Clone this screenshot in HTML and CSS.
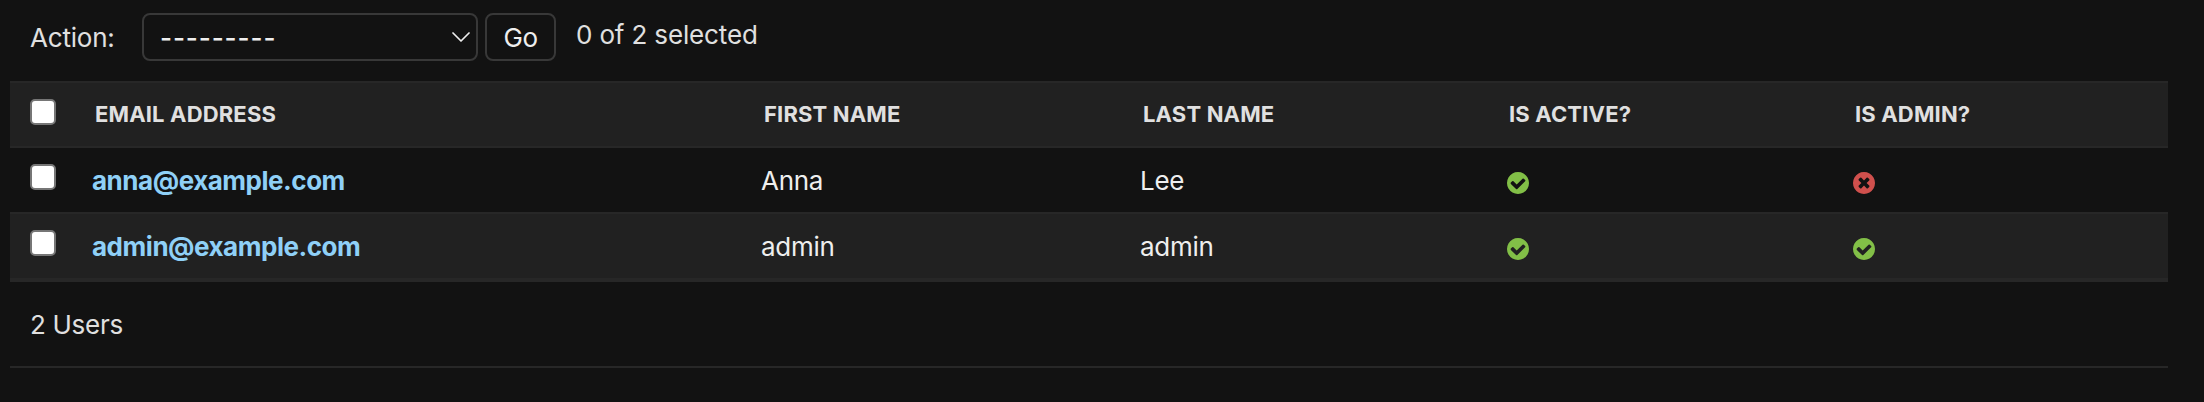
FILE: index.html
```
<!DOCTYPE html>
<html lang="en">
<head>
<meta charset="utf-8">
<title>Users</title>
<link rel="stylesheet" href="styles.css">
</head>
<body>
<svg class="defs" width="0" height="0">
  <symbol id="yes" viewBox="0 0 1536 1536"><path d="M1284 606q0-28-18-46l-91-90q-19-19-45-19t-45 19l-408 407-226-226q-19-19-45-19t-45 19l-91 90q-18 18-18 46 0 27 18 45l362 362q19 19 45 19 27 0 46-19l543-543q18-18 18-45zm252 162q0 209-103 385.500t-279.500 279.500-385.500 103-385.500-103-279.500-279.500-103-385.500 103-385.500 279.500-279.500 385.500-103 385.500 103 279.500 279.500 103 385.500z"/></symbol>
  <symbol id="no" viewBox="0 0 1536 1536"><path d="M1149 994q0-26-19-45l-181-181 181-181q19-19 19-45 0-27-19-46l-90-90q-19-19-46-19-26 0-45 19l-181 181-181-181q-19-19-45-19-27 0-46 19l-90 90q-19 19-19 46 0 26 19 45l181 181-181 181q-19 19-19 45 0 27 19 46l90 90q19 19 46 19 26 0 45-19l181-181 181 181q19 19 45 19 27 0 46-19l90-90q19-19 19-46zm387-226q0 209-103 385.500t-279.500 279.500-385.500 103-385.500-103-279.500-279.500-103-385.500 103-385.500 279.500-279.500 385.500-103 385.500 103 279.500 279.500 103 385.500z"/></symbol>
</svg>
<main class="changelist">
  <div class="actions">
    <span class="label">Action:</span>
    <div class="select"><span class="dashes">---------</span><svg class="chevron" width="18" height="11" viewBox="0 0 18 11"><path d="M1 1l8 8 8-8"/></svg></div>
    <button class="go">Go</button>
    <span class="counter">0 of 2 selected</span>
  </div>
  <div class="table">
    <div class="row head">
      <input type="checkbox" class="box"><span>EMAIL ADDRESS</span><span>FIRST NAME</span><span>LAST NAME</span><span>IS ACTIVE?</span><span>IS ADMIN?</span>
    </div>
    <div class="row">
      <input type="checkbox" class="box"><a class="link">anna@example.com</a><span class="cell">Anna</span><span class="cell">Lee</span><svg class="icon yes"><use href="#yes"/></svg><svg class="icon no"><use href="#no"/></svg>
    </div>
    <div class="row even">
      <input type="checkbox" class="box"><a class="link">admin@example.com</a><span class="cell">admin</span><span class="cell">admin</span><svg class="icon yes"><use href="#yes"/></svg><svg class="icon yes"><use href="#yes"/></svg>
    </div>
  </div>
  <p class="paginator">2 Users</p>
</main>
</body>
</html>
```
FILE: styles.css
```
* { box-sizing: border-box; }
body { margin: 0; height: 402px; overflow: hidden; background: #121212; color: #eee; font-family: Inter, "Liberation Sans", sans-serif; font-size: 26px; line-height: 32px; letter-spacing: -0.2px; }
.defs { display: block; width: 0; height: 0; position: absolute; }
.changelist { width: 2158px; margin-left: 10px; }
.actions { display: flex; height: 81px; padding: 13px 0 0 20px; color: #e0e0e0; }
.label { width: 112px; padding-top: 9px; }
.select { display: flex; justify-content: space-between; width: 336px; height: 48px; padding: 7px 6px 0 16px; border: 2px solid #383838; border-radius: 8px; color: #eee; }
.dashes { font-weight: 500; letter-spacing: 0.9px; }
.chevron { margin-top: 10px; fill: none; stroke: #eee; stroke-width: 1.7; stroke-linecap: round; stroke-linejoin: round; }
.go { width: 71px; height: 48px; margin: 0 20px 0 7px; padding: 1px 0 0; border: 2px solid #383838; border-radius: 8px; background: #121212; color: #eee; font: inherit; letter-spacing: -0.4px; }
.counter { padding-top: 6px; letter-spacing: -0.15px; }
.row { display: grid; grid-template-columns: 62px 669px 379px 367px 346px 1fr; height: 66px; padding: 14px 0 0 20px; border-bottom: 2px solid #272727; }
.head { height: 67px; border-top: 2px solid #272727; background: #212121; color: #e0e0e0; font-size: 22px; font-weight: 700; letter-spacing: 0.16px; }
.head span { padding: 1px 0 0 3px; }
.head span:nth-of-type(n+4) { padding-left: 2px; }
.even { height: 68px; border-bottom-width: 4px; background: #212121; }
.box { appearance: none; width: 26px; height: 26px; margin: 2px 0 0; border: 2px solid #767676; border-radius: 5px; background: #fff; }
.link { padding-top: 3px; color: #8fd0f7; font-weight: 700; letter-spacing: -0.47px; }
.cell { padding-top: 3px; letter-spacing: -0.3px; }
.icon { width: 22px; height: 22px; margin-top: 10px; }
.yes { fill: #82bf47; }
.no { fill: #d0504d; }
.paginator { height: 86px; margin: 0; padding: 27px 0 0 20px; border-bottom: 2px solid #272727; color: #e0e0e0; letter-spacing: -0.3px; }
```
